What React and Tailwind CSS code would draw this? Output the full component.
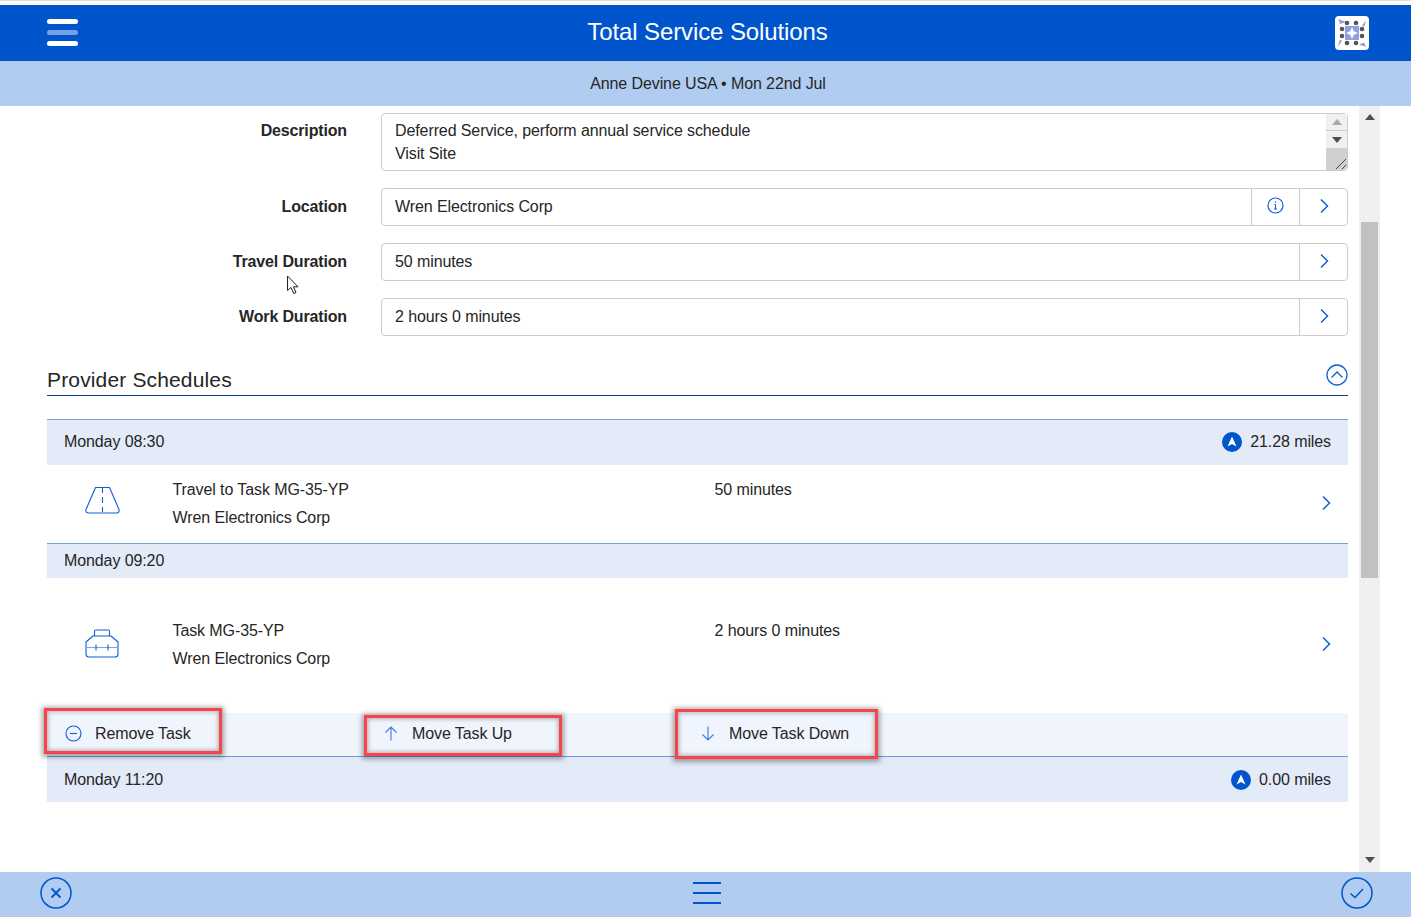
import React from 'react';

const ChevronRight = () => (
  <svg className="mb-[2px]" width="12" height="16" viewBox="0 0 12 16" fill="none" stroke="#0f5fd6" strokeWidth="1.5">
    <path d="M3 1.5 9.5 8 3 14.5" />
  </svg>
);

const NavBadge = () => (
  <svg width="20" height="20" viewBox="0 0 20 20">
    <circle cx="10" cy="10" r="10" fill="#0055cc" />
    <path d="M10 4.5 14.5 14.5 10 12 5.5 14.5Z" fill="#fff" />
  </svg>
);

const Logo = () => (
  <svg width="34" height="34" viewBox="0 0 34 34">
    <rect width="34" height="34" rx="4" fill="#fff" />
    <path d="M3.5 3 11 6 5 8ZM31 4 29.5 10.5 27 10ZM3 31 4.5 24 7 24.5ZM31 31 24 28.5 29 26.5Z" fill="#8f9fe0" />
    <rect x="10" y="10" width="14" height="14" fill="#8f9fe0" />
    <path d="M17 11 18.8 15.2 23 17 18.8 18.8 17 23 15.2 18.8 11 17 15.2 15.2Z" fill="#fff" />
    {[[12, 7], [21, 7], [12, 27], [21, 27], [7, 13], [7, 20], [27, 13], [27, 20]].map(([cx, cy]) => (
      <circle key={`${cx}-${cy}`} cx={cx} cy={cy} r="2.3" fill="#555" />
    ))}
  </svg>
);

const Field = ({ value, info }) => (
  <div className="flex h-[38px] flex-1 items-center rounded border border-[#ccc] bg-white">
    <div className="flex-1 pl-[13px]">{value}</div>
    {info && (
      <div className="flex h-full w-12 items-center justify-center border-l border-[#ccc]">
        <svg className="mb-[3px]" width="17" height="17" viewBox="0 0 17 17" fill="none" stroke="#0f5fd6">
          <circle cx="8.5" cy="8.5" r="7.5" strokeWidth="1.2" />
          <path d="M8.5 7.5V12M7 12H10M7.3 7.5H8.5" strokeWidth="1.1" />
          <path d="M8.5 4.5V5.7" strokeWidth="1.4" />
        </svg>
      </div>
    )}
    <div className="flex h-full w-12 items-center justify-center border-l border-[#ccc]">
      <ChevronRight />
    </div>
  </div>
);

const Label = ({ children }) => (
  <div className="w-[300px] shrink-0 text-right font-bold tracking-[-0.15px]">{children}</div>
);

const TimeRow = ({ time, miles, className }) => (
  <div className={`flex items-center justify-between bg-[#e3eaf8] pl-[17px] pr-[17px] ${className}`}>
    <span>{time}</span>
    {miles && (
      <span className="flex items-center gap-[8px]">
        <NavBadge />
        {miles}
      </span>
    )}
  </div>
);

const ScheduleItem = ({ icon, title, duration, className }) => (
  <div className={`flex items-center bg-white ${className}`}>
    <div className="flex w-[125.5px] shrink-0 justify-center pr-[15px]">{icon}</div>
    <div className="w-[542px] shrink-0 leading-[28px]">
      <div>{title}</div>
      <div>Wren Electronics Corp</div>
    </div>
    <div className="flex-1 self-center pb-[28px] leading-[28px]">{duration}</div>
    <div className="pr-[16px]">
      <ChevronRight />
    </div>
  </div>
);

const Annotation = ({ className }) => (
  <div
    className={`absolute border-[3px] border-[#f8434a] shadow-[0_1px_5px_2px_rgba(0,0,0,0.35),inset_0_0_4px_1px_rgba(0,0,0,0.3)] ${className}`}
  />
);

export default function App() {
  return (
    <div
      className="flex h-[918px] flex-col overflow-hidden bg-white text-[16px] tracking-[-0.1px] text-[#262626]"
      style={{ fontFamily: '"Liberation Sans", Arial, sans-serif' }}
    >
      <div className="h-[5px] border-t border-[#ddd] bg-white" />

      {/* Header */}
      <div className="flex h-[56px] items-center justify-between bg-[#0055cc] pl-[46px] pr-[42px]">
        <svg width="34" height="30" viewBox="0 0 34 30">
          <rect x="1" y="1" width="31" height="5" rx="2.5" fill="#fff" />
          <rect x="1" y="12" width="31" height="5" rx="2.5" fill="#fff" fillOpacity="0.45" />
          <rect x="1" y="23" width="31" height="5" rx="2.5" fill="#fff" />
        </svg>
        <div className="mb-[2px] text-[24px] tracking-[-0.1px] text-white">Total Service Solutions</div>
        <Logo />
      </div>
      <div className="flex h-[45px] items-center justify-center bg-[#b0ccf0] pl-[5px]">Anne Devine USA • Mon 22nd Jul</div>

      {/* Body */}
      <div className="flex min-h-0 flex-1">
        <div className="w-[1348px] shrink-0 pl-[47px]">
          <div className="flex flex-col pt-[7px]">
            <div className="flex gap-[34px]">
              <Label>
                <div className="pt-[6px]">Description</div>
              </Label>
              <div className="flex h-[58px] flex-1 rounded border border-[#ccc]">
                <div className="flex-1 pl-[13px] pt-[5px] leading-[23px]">
                  <div>Deferred Service, perform annual service schedule</div>
                  <div>Visit Site</div>
                </div>
                <div className="flex w-[21px] flex-col bg-[#f0f0f0]">
                  <div className="flex h-[17px] items-center justify-center border-b border-[#ccc]">
                    <div className="h-0 w-0 border-x-[5px] border-b-[6px] border-x-transparent border-b-[#aaa]" />
                  </div>
                  <div className="flex h-[17px] items-center justify-center">
                    <div className="h-0 w-0 border-x-[5px] border-t-[6px] border-x-transparent border-t-[#505050]" />
                  </div>
                  <div className="flex flex-1 items-end justify-end rounded-br bg-[#d0d0d0]">
                    <svg width="12" height="12" viewBox="0 0 12 12" fill="none" stroke="#444">
                      <path d="M1 11 11 1M7 11 11 7" />
                    </svg>
                  </div>
                </div>
              </div>
            </div>

            <div className="mt-[17px] flex items-center gap-[34px]">
              <Label>Location</Label>
              <Field value="Wren Electronics Corp" info />
            </div>
            <div className="mt-[17px] flex items-center gap-[34px]">
              <div className="relative">
                <Label>Travel Duration</Label>
                <svg className="absolute left-[239px] top-[25px]" width="14" height="20" viewBox="0 0 14 20" fill="#fff" stroke="#222">
                  <path d="M1.5 1V15.5L5 12.5 7.8 18.5 10 17.5 7.5 11.8H12Z" />
                </svg>
              </div>
              <Field value="50 minutes" />
            </div>
            <div className="mt-[17px] flex items-center gap-[34px]">
              <Label>Work Duration</Label>
              <Field value="2 hours 0 minutes" />
            </div>
          </div>

          {/* Provider Schedules */}
          <div className="mt-[26px] flex h-[34px] items-start justify-between border-b border-[#0b3f8f] pt-[6px]">
            <span className="text-[21px] leading-[24px] tracking-[0.15px]">Provider Schedules</span>
            <svg className="-mt-[4px]" width="22" height="22" viewBox="0 0 22 22" fill="none" stroke="#0f5fd6" strokeWidth="1.3">
              <circle cx="11" cy="11" r="10" />
              <path d="M5.5 13.5 11 8l5.5 5.5" />
            </svg>
          </div>

          <TimeRow time="Monday 08:30" miles="21.28 miles" className="mt-[23px] h-[46px] border-t border-[#7c9fd8] pb-[2px]" />
          <ScheduleItem
            className="h-[78px]"
            title="Travel to Task MG-35-YP"
            duration="50 minutes"
            icon={
              <svg className="mb-[8px]" width="37" height="30" viewBox="0 0 37 30" fill="none" stroke="#0f5fd6" strokeWidth="1.1">
                <path d="M11.5 2.5H25.5L35 24.5Q35.5 28 32.5 28H4.5Q1.5 28 2 24.5Z" strokeLinejoin="round" />
                <path d="M18.5 3V8M18.5 12V18M18.5 22V27" />
              </svg>
            }
          />
          <TimeRow time="Monday 09:20" className="h-[35px] border-t border-[#7c9fd8]" />
          <ScheduleItem
            className="h-[135px] pb-[2px]"
            title="Task MG-35-YP"
            duration="2 hours 0 minutes"
            icon={
              <svg className="mb-[4px]" width="34" height="30" viewBox="0 0 34 30" fill="none" stroke="#0f5fd6" strokeWidth="1.1">
                <path d="M9.5 8V3.5Q9.5 2 11 2H23Q24.5 2 24.5 3.5V8" />
                <path d="M8 8H26L33 14V26Q33 29 30 29H4Q1 29 1 26V14Z" strokeLinejoin="round" />
                <path d="M1 19.5H33" stroke="#7ba6e6" />
                <path d="M11 16.5V22.5M23 16.5V22.5" />
              </svg>
            }
          />

          {/* Task actions */}
          <div className="relative flex h-[44px] items-center border-b border-[#6f9ae0] bg-[#f0f4fd] pb-[2px]">
            <div className="flex w-[317px] shrink-0 items-center gap-[13px] pl-[18px]">
              <svg width="17" height="17" viewBox="0 0 17 17" fill="none" stroke="#0f5fd6" strokeWidth="1.1">
                <circle cx="8.5" cy="8.5" r="7.5" />
                <path d="M5 8.5H12" />
              </svg>
              Remove Task
            </div>
            <div className="flex w-[317px] shrink-0 items-center gap-[14px] pl-[20px]">
              <svg width="14" height="15" viewBox="0 0 14 15" fill="none" stroke="#3a7ae0" strokeWidth="1.1">
                <path d="M7 14.5V1M1.5 6.5 7 1l5.5 5.5" />
              </svg>
              Move Task Up
            </div>
            <div className="flex items-center gap-[14px] pl-[20px]">
              <svg width="14" height="15" viewBox="0 0 14 15" fill="none" stroke="#3a7ae0" strokeWidth="1.1">
                <path d="M7 0.5V14M1.5 8.5 7 14l5.5-5.5" />
              </svg>
              Move Task Down
            </div>
            <Annotation className="-left-[3px] -top-[5px] h-[46px] w-[178px]" />
            <Annotation className="left-[317px] top-[2px] h-[41px] w-[198px]" />
            <Annotation className="left-[628px] -top-[4px] h-[50px] w-[203px]" />
          </div>
          <TimeRow time="Monday 11:20" miles="0.00 miles" className="h-[45px]" />
        </div>

        {/* Page scrollbar */}
        <div className="ml-[11px] flex w-[21px] flex-col items-center bg-[#f0f0f0]">
          <div className="flex h-[116px] w-full flex-col items-center pt-[8px]">
            <div className="h-0 w-0 border-x-[5px] border-b-[6px] border-x-transparent border-b-[#505050]" />
          </div>
          <div className="h-[356px] w-[17px] bg-[#c1c1c1]" />
          <div className="flex w-full flex-1 flex-col items-center justify-end pb-[9px]">
            <div className="h-0 w-0 border-x-[5px] border-t-[6px] border-x-transparent border-t-[#505050]" />
          </div>
        </div>
      </div>

      {/* Footer */}
      <div className="flex h-[44px] items-center justify-between bg-[#b0ccf0] pb-[2px] pl-[40px] pr-[38px]">
        <svg width="32" height="32" viewBox="0 0 32 32" fill="none" stroke="#0055cc">
          <circle cx="16" cy="16" r="15" strokeWidth="1.5" />
          <path d="M11.5 11.5 20.5 20.5M20.5 11.5 11.5 20.5" strokeWidth="1.8" />
        </svg>
        <svg width="28" height="22" viewBox="0 0 28 22" fill="none" stroke="#0055cc" strokeWidth="2">
          <path d="M0 1H28M0 11H28M0 21H28" />
        </svg>
        <svg width="32" height="32" viewBox="0 0 32 32" fill="none" stroke="#0055cc">
          <circle cx="16" cy="16" r="15" strokeWidth="1.5" />
          <path d="M9.5 16.5 14 20.5 22 12" strokeWidth="1.5" />
        </svg>
      </div>
      <div className="h-[2px] border-t border-[#c8c8c8] bg-white" />
    </div>
  );
}
